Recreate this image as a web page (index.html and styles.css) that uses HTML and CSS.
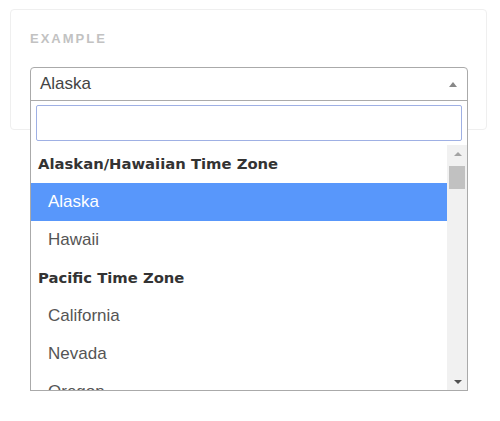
FILE: index.html
```html
<!DOCTYPE html>
<html>
<head>
<meta charset="utf-8">
<link rel="stylesheet" href="styles.css">
</head>
<body>
<div class="page">
<div class="card">
  <div class="label">EXAMPLE</div>
  <div class="select-wrap">
    <div class="select">
      <span class="select-value">Alaska</span>
      <span class="select-arrow"></span>
    </div>
    <div class="dropdown">
      <div class="search-box"><div class="search-input"></div></div>
      <div class="results">
        <ul class="list">
          <li class="group">Alaskan/Hawaiian Time Zone</li>
          <li class="option highlighted">Alaska</li>
          <li class="option">Hawaii</li>
          <li class="group">Pacific Time Zone</li>
          <li class="option">California</li>
          <li class="option">Nevada</li>
          <li class="option">Oregon</li>
        </ul>
        <div class="scrollbar">
          <div class="sb-btn"><span class="tri-up"></span></div>
          <div class="sb-track"><div class="sb-thumb"></div></div>
          <div class="sb-btn"><span class="tri-down"></span></div>
        </div>
      </div>
    </div>
  </div>
</div>
</div>
</body>
</html>
```

FILE: styles.css
```css
* { box-sizing: border-box; }
html, body { margin: 0; padding: 0; background: #fff; }
body {
  font-family: "Liberation Sans", Arial, sans-serif;
}
.page {
  min-height: 421px;
  padding: 9px 13px 0 10px;
}
.card {
  width: 477px;
  height: 121px;
  border: 1px solid #efefef;
  border-radius: 4px;
  padding: 21px 18px 0 19px;
}
.label {
  font-size: 13px;
  font-weight: bold;
  letter-spacing: 2px;
  color: #c2c2c2;
  line-height: 16px;
  margin-bottom: 20px;
}
.select-wrap { position: relative; width: 438px; }
.select {
  height: 34px;
  border: 1px solid #aaa;
  border-radius: 4px 4px 0 0;
  display: flex;
  align-items: center;
  justify-content: space-between;
  padding: 0 10px 0 9px;
  font-size: 17px;
  color: #444;
  background: #fff;
}
.select-arrow {
  width: 0; height: 0;
  border-left: 4px solid transparent;
  border-right: 4px solid transparent;
  border-bottom: 5px solid #888;
}
.dropdown {
  position: absolute;
  z-index: 10;
  left: 0;
  top: 33px;
  width: 438px;
  height: 291px;
  background: #fff;
  border: 1px solid #aaa;
  display: flex;
  flex-direction: column;
}
.search-box { padding: 4px 5px 4px 5px; }
.search-input {
  height: 36px;
  border: 1px solid #9fb0e4;
  border-radius: 2px;
  background: #fff;
}
.results {
  flex: 1;
  display: flex;
  min-height: 0;
  overflow: hidden;
}
.list {
  list-style: none;
  margin: 0;
  padding: 0;
  flex: 1;
  overflow: hidden;
}
.list li {
  height: 38px;
  line-height: 38px;
  white-space: nowrap;
}
.group {
  font-family: "DejaVu Sans", Verdana, sans-serif;
  font-weight: bold;
  font-size: 14.8px;
  color: #333;
  padding-left: 7px;
}
.option {
  font-size: 17px;
  color: #555;
  padding-left: 17px;
}
.option.highlighted {
  background: #5897fb;
  color: #fff;
}
.scrollbar {
  width: 20px;
  background: #f1f1f1;
  display: flex;
  flex-direction: column;
  padding-left: 1px;
}
.sb-btn {
  height: 17px;
  display: flex;
  align-items: center;
  justify-content: center;
}
.sb-track { flex: 1; padding-top: 4px; }
.sb-thumb {
  height: 23px;
  margin: 0 2px 0 1px;
  background: #c1c1c1;
}
.tri-up {
  width: 0; height: 0;
  border-left: 4px solid transparent;
  border-right: 4px solid transparent;
  border-bottom: 4px solid #a3a3a3;
}
.tri-down {
  width: 0; height: 0;
  border-left: 4px solid transparent;
  border-right: 4px solid transparent;
  border-top: 4px solid #505050;
}
```
